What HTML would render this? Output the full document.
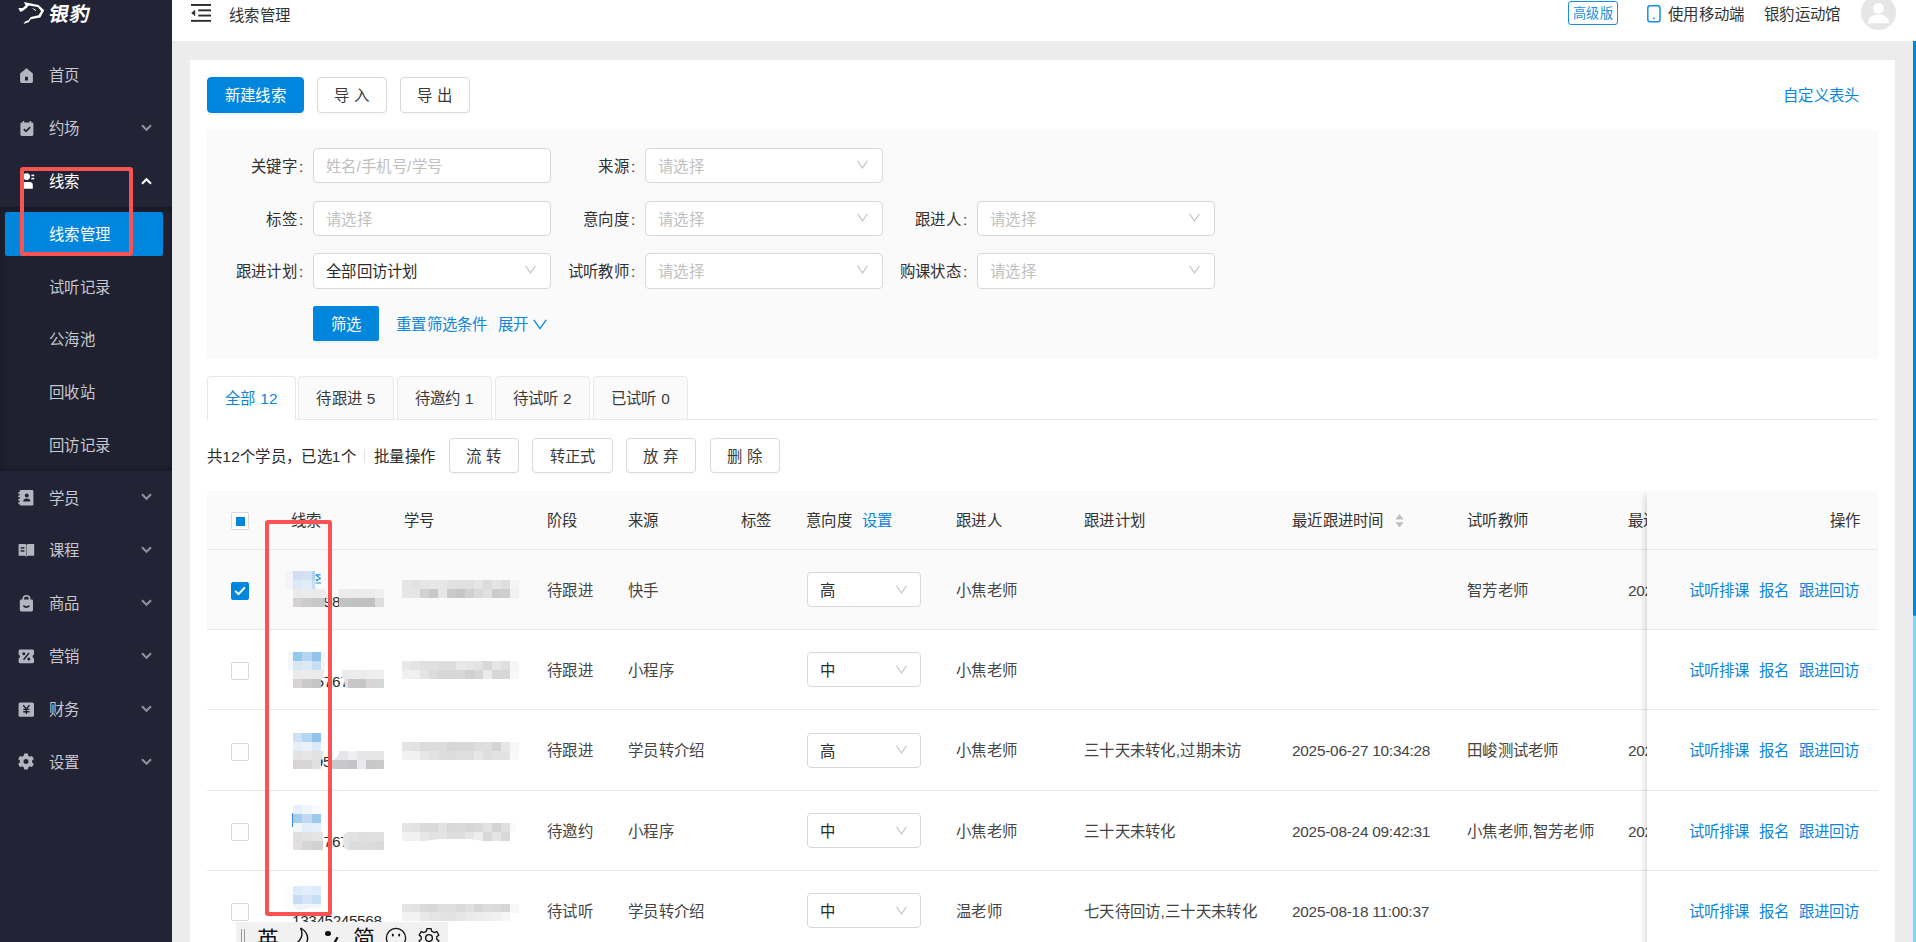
<!DOCTYPE html>
<html lang="zh-CN">
<head>
<meta charset="utf-8">
<title>线索管理</title>
<style>
*{box-sizing:border-box;margin:0;padding:0}
html,body{width:1916px;height:942px;overflow:hidden}
body{position:relative;background:#ececec;font-family:"Liberation Sans",sans-serif;font-size:15.4px;color:#2b2b2b;line-height:1;letter-spacing:0.3px}
.abs{position:absolute}
svg{display:block}
/* sidebar */
#side{position:absolute;left:0;top:0;width:172px;height:942px;background:#222435}
#sub{position:absolute;left:0;top:207px;width:172px;height:264px;background:#1f2130;box-shadow:inset 0 3px 6px -2px rgba(0,0,0,.3),inset 0 -3px 6px -2px rgba(0,0,0,.3)}
#act{position:absolute;left:5px;top:212px;width:158px;height:44px;background:#0086dc;border-radius:2px}
.mi{position:absolute;left:49px;margin-top:1px;height:20px;line-height:20px;font-size:15.4px;color:#c6c7cf;white-space:nowrap}
.mi.w{color:#fff}
.ic{position:absolute;left:19px}
.chev{position:absolute;left:141px}
/* header */
#head{position:absolute;left:172px;top:0;width:1744px;height:41px;background:#fff}
#head .t{position:absolute;margin-top:1px;height:20px;line-height:20px;white-space:nowrap;color:#333}
/* card */
#card{position:absolute;left:190px;top:60px;width:1705px;height:882px;background:#fff}
.btn{position:absolute;height:36px;line-height:36px;border:1px solid #d9d9d9;border-radius:4px;background:#fff;text-align:center;color:#3a3a3a;white-space:nowrap;box-shadow:0 2px 0 rgba(0,0,0,.015)}
.btn.p{background:#0086dc;border-color:#0086dc;color:#fff;box-shadow:0 2px 0 rgba(0,0,0,.045)}
.btn.s{height:35px;line-height:35px}
.lnk{color:#0b86dc !important}
#filt{position:absolute;left:207px;top:130px;width:1671px;height:229px;background:#fafafa}
.lab i{font-style:normal;margin:0 1px 0 2px}
.lab{position:absolute;margin-top:1px;width:120px;text-align:right;height:20px;line-height:20px;white-space:nowrap;color:#303030}
.inp{position:absolute;width:238px;height:35px;border:1px solid #d9d9d9;border-radius:4px;background:#fff;line-height:35px;padding-left:12px;color:#bfbfbf;white-space:nowrap}
.inp.v{color:#2b2b2b}
.inp svg{position:absolute;right:14px;top:11px}
/* tabs */
.tab{position:absolute;top:376px;height:44px;border:1px solid #e8e8e8;border-radius:4px 4px 0 0;background:#fafafa;line-height:44px;text-align:center;color:#3a3a3a;white-space:nowrap}
.tab.on{background:#fff;border-bottom-color:#fff;color:#0b86dc}
#tabline{position:absolute;left:207px;top:419px;width:1671px;height:1px;background:#e8e8e8}
/* table */
#thead{position:absolute;left:207px;top:491px;width:1671px;height:59px;background:#fafafa;border-bottom:1px solid #e8e8e8;border-radius:4px 4px 0 0}
.row{position:absolute;left:207px;width:1671px;border-bottom:1px solid #e8e8e8}
.row.sel{background:#fafafa}
.c{position:absolute;margin-top:1px;height:20px;line-height:20px;white-space:nowrap;color:#454545}
.h .c{color:#333}
.c.n{letter-spacing:-0.25px}
.cb{position:absolute;left:24px;width:18px;height:18px;border:1px solid #d9d9d9;border-radius:2px;background:#fff}
.cb.on{background:#0086dc;border-color:#0086dc}
.sel2{position:absolute;left:600px;width:114px;height:35px;border:1px solid #d9d9d9;border-radius:4px;background:#fff;line-height:35px;padding-left:12px;color:#2b2b2b}
.sel2 svg{position:absolute;right:13px;top:11.6px}
#fix{position:absolute;left:1647px;top:491px;width:231px;height:470px;box-shadow:-6px 0 6px -4px rgba(0,0,0,.15);background:#fff}
.px{position:absolute}
</style>
</head>
<body>
<div id="side">
  <!-- logo -->
  <svg class="abs" style="left:18px;top:1px" width="28" height="25" viewBox="0 0 28 25">
    <path d="M5.9 1 L20.5 4 L26.2 9.3 L22.3 16.5 L12.7 18.3 L10.9 20.9 L5.6 22.9 L7 20.5 L10.5 19.2 L12.7 16.1 L20.5 14.3 L23.2 10 L19.7 5.9 L10.6 4.5 L9.2 6.5 L4.3 10.2 L2.1 10.8 L0.4 6.9 L4.8 6.9 L7.6 4.3 Z" fill="#fff"/>
    <path d="M13.6 7.2 L16.8 7.9 L18.2 9.8 L17.4 9.9 L16.2 8.7 Z" fill="#fff"/>
  </svg>
  <div class="abs" style="left:46.5px;top:3px;width:48px;height:22px;line-height:22px;font-size:19.5px;font-weight:bold;color:#fff;letter-spacing:1.6px;transform:skewX(-11deg);transform-origin:0 100%">银豹</div>

  <div id="sub"></div>
  <div id="act"></div>

  <!-- icons -->
  <!-- home -->
  <svg class="ic" style="left:20px;top:68px" width="13" height="15" viewBox="0 0 13 15"><path d="M6.5 0.2 L12.9 5.6 V13.6 Q12.9 14.9 11.6 14.9 H1.4 Q0.1 14.9 0.1 13.6 V5.6 Z M5 8.8 V12.6 H8 V8.8 Z" fill="#b4b5be" fill-rule="evenodd"/></svg>
  <!-- calendar check -->
  <svg class="ic" style="left:20px;top:121px" width="14" height="15" viewBox="0 0 14 15"><path d="M2.6 0 H4.2 V1.4 H9.6 V0 H11.2 V1.4 H12 Q13.4 1.4 13.4 2.8 V13.6 Q13.4 15 12 15 H1.8 Q0.4 15 0.4 13.6 V2.8 Q0.4 1.4 1.8 1.4 H2.6 Z" fill="#b4b5be"/><path d="M3.8 8.2 L6 10.4 L10.2 6.2" fill="none" stroke="#222435" stroke-width="1.7"/></svg>
  <!-- user list (active, white) -->
  <svg class="ic" style="left:20px;top:172px" width="15" height="18" viewBox="0 0 15 18"><circle cx="6.6" cy="4.6" r="3.4" fill="#fff"/><path d="M2.2 16.8 V13 Q2.2 10 5.2 10 H9.6 Q12.8 10 12.8 13 V16.8 Z" fill="#fff"/><rect x="11.4" y="2.6" width="2.8" height="1.6" fill="#fff"/><rect x="11.4" y="5.8" width="2.8" height="1.6" fill="#fff"/></svg>
  <!-- contact book -->
  <svg class="ic" style="left:18px;top:490px" width="16" height="16" viewBox="0 0 16 16"><path d="M3 0 H14 Q15.4 0 15.4 1.4 V14.2 Q15.4 15.6 14 15.6 H3 Q1.6 15.6 1.6 14.2 V1.4 Q1.6 0 3 0 Z" fill="#b4b5be"/><rect x="0" y="2.2" width="2.6" height="1.5" rx=".7" fill="#b4b5be"/><rect x="0" y="5.6" width="2.6" height="1.5" rx=".7" fill="#b4b5be"/><rect x="0" y="9" width="2.6" height="1.5" rx=".7" fill="#b4b5be"/><rect x="0" y="12.2" width="2.6" height="1.5" rx=".7" fill="#b4b5be"/><circle cx="8.8" cy="5.4" r="2" fill="#222435"/><path d="M5.2 11.4 Q5.2 8.4 8.8 8.4 Q12.4 8.4 12.4 11.4 Z" fill="#222435"/></svg>
  <!-- book -->
  <svg class="ic" style="left:18px;top:543px" width="17" height="15" viewBox="0 0 17 15"><path d="M0.6 1 H6.4 Q8 1 8.4 2 Q8.8 1 10.4 1 H16.2 V12.8 H10.4 Q9 12.8 8.4 14.2 Q7.8 12.8 6.4 12.8 H0.6 Z" fill="#b4b5be"/><rect x="2.6" y="4.2" width="3.8" height="1.5" fill="#222435"/><rect x="2.6" y="7.2" width="3.8" height="1.5" fill="#222435"/><rect x="8" y="2.4" width=".8" height="10.8" fill="#222435" opacity=".6"/></svg>
  <!-- bag -->
  <svg class="ic" style="left:19px;top:595px" width="15" height="17" viewBox="0 0 15 17"><path d="M4.2 5 V4 Q4.2 0.8 7.4 0.8 Q10.6 0.8 10.6 4 V5" fill="none" stroke="#b4b5be" stroke-width="1.6"/><path d="M2.2 4.6 H12.6 Q14 4.6 14 6 V15 Q14 16.4 12.6 16.4 H2.2 Q0.8 16.4 0.8 15 V6 Q0.8 4.6 2.2 4.6 Z" fill="#b4b5be"/><path d="M4.4 10.6 Q7.4 13.6 10.4 10.6" fill="none" stroke="#222435" stroke-width="1.6"/></svg>
  <!-- coupon percent -->
  <svg class="ic" style="left:18px;top:648.7px" width="17" height="15" viewBox="0 0 17 15"><path d="M2 0.6 H14.6 Q16 0.6 16 2 V5.4 Q14.6 5.8 14.6 7.4 Q14.6 9 16 9.4 V12.8 Q16 14.2 14.6 14.2 H2 Q0.6 14.2 0.6 12.8 V9.4 Q2 9 2 7.4 Q2 5.8 0.6 5.4 V2 Q0.6 0.6 2 0.6 Z" fill="#b4b5be"/><path d="M5.6 10.8 L11 4" stroke="#222435" stroke-width="1.5"/><circle cx="5.8" cy="4.8" r="1.5" fill="#222435"/><circle cx="10.8" cy="10" r="1.5" fill="#222435"/></svg>
  <!-- yen -->
  <svg class="ic" style="left:18px;top:701.7px" width="17" height="15" viewBox="0 0 17 15"><rect x="0.6" y="0.4" width="15.4" height="14.4" rx="1.6" fill="#b4b5be"/><path d="M5.2 3.2 L8.3 7 L11.4 3.2 M8.3 7 V12 M5.2 7.4 H11.4 M5.2 9.8 H11.4" fill="none" stroke="#222435" stroke-width="1.4"/></svg>
  <!-- gear -->
  <svg class="ic" style="left:18px;top:753px" width="16" height="17" viewBox="0 0 16 17"><g transform="translate(8 8.5)"><g fill="#b4b5be"><rect x="-2.1" y="-8" width="4.2" height="16" rx="1"/><rect x="-2.1" y="-8" width="4.2" height="16" rx="1" transform="rotate(60)"/><rect x="-2.1" y="-8" width="4.2" height="16" rx="1" transform="rotate(120)"/><circle r="6.2"/></g><circle r="2.5" fill="#222435"/></g></svg>

  <!-- labels -->
  <div class="mi" style="top:65px">首页</div>
  <div class="mi" style="top:118px">约场</div>
  <div class="mi w" style="top:171px">线索</div>
  <div class="mi w" style="top:224px">线索管理</div>
  <div class="mi" style="top:277px">试听记录</div>
  <div class="mi" style="top:329px">公海池</div>
  <div class="mi" style="top:382px">回收站</div>
  <div class="mi" style="top:435px">回访记录</div>
  <div class="mi" style="top:488px">学员</div>
  <div class="mi" style="top:540px">课程</div>
  <div class="mi" style="top:593px">商品</div>
  <div class="mi" style="top:646px">营销</div>
  <div class="mi" style="top:699px">财务</div>
  <div class="mi" style="top:752px">设置</div>

  <!-- chevrons -->
  <svg class="chev" style="top:124px" width="11" height="8" viewBox="0 0 11 8"><path d="M1 1.2 L5.5 5.8 L10 1.2" fill="none" stroke="#8e909b" stroke-width="2.1"/></svg>
  <svg class="chev" style="top:177px" width="11" height="8" viewBox="0 0 11 8"><path d="M1 6.8 L5.5 2.2 L10 6.8" fill="none" stroke="#fff" stroke-width="2.1"/></svg>
  <svg class="chev" style="top:493px" width="11" height="8" viewBox="0 0 11 8"><path d="M1 1.2 L5.5 5.8 L10 1.2" fill="none" stroke="#8e909b" stroke-width="2.1"/></svg>
  <svg class="chev" style="top:546px" width="11" height="8" viewBox="0 0 11 8"><path d="M1 1.2 L5.5 5.8 L10 1.2" fill="none" stroke="#8e909b" stroke-width="2.1"/></svg>
  <svg class="chev" style="top:599px" width="11" height="8" viewBox="0 0 11 8"><path d="M1 1.2 L5.5 5.8 L10 1.2" fill="none" stroke="#8e909b" stroke-width="2.1"/></svg>
  <svg class="chev" style="top:652px" width="11" height="8" viewBox="0 0 11 8"><path d="M1 1.2 L5.5 5.8 L10 1.2" fill="none" stroke="#8e909b" stroke-width="2.1"/></svg>
  <svg class="chev" style="top:705px" width="11" height="8" viewBox="0 0 11 8"><path d="M1 1.2 L5.5 5.8 L10 1.2" fill="none" stroke="#8e909b" stroke-width="2.1"/></svg>
  <svg class="chev" style="top:758px" width="11" height="8" viewBox="0 0 11 8"><path d="M1 1.2 L5.5 5.8 L10 1.2" fill="none" stroke="#8e909b" stroke-width="2.1"/></svg>
</div>

<div id="head">
  <!-- menu fold icon: page x 191..211 => local 19..39 -->
  <svg class="abs" style="left:19px;top:4px" width="20" height="18" viewBox="0 0 20 18">
    <rect x="0" y="0" width="20" height="1.9" fill="#2e2e2e"/>
    <rect x="7.2" y="5.4" width="12.8" height="1.9" fill="#2e2e2e"/>
    <rect x="7.2" y="10.6" width="12.8" height="1.9" fill="#2e2e2e"/>
    <rect x="0" y="15.9" width="20" height="1.9" fill="#2e2e2e"/>
    <path d="M0.2 9 L4.2 5.8 V12.2 Z" fill="#2e2e2e"/>
  </svg>
  <div class="t" style="left:57px;top:4.5px">线索管理</div>
  <!-- badge 1568..1618 => local 1396..1446 -->
  <div class="abs" style="left:1396px;top:1px;width:50px;height:24px;border:1px solid #1a8fe0;border-radius:3px;color:#1a8fe0;font-size:13.2px;line-height:24px;text-align:center;white-space:nowrap">高级版</div>
  <!-- phone icon 1647..1661 => local 1475 -->
  <svg class="abs" style="left:1475px;top:5px" width="14" height="18" viewBox="0 0 14 18"><rect x="0.8" y="0.8" width="12.2" height="16" rx="2.4" fill="none" stroke="#1a8fe0" stroke-width="1.5"/><rect x="6.1" y="12.6" width="1.6" height="1.6" fill="#1a8fe0"/></svg>
  <div class="t" style="left:1496px;top:4px">使用移动端</div>
  <div class="t" style="left:1592px;top:4px">银豹运动馆</div>
  <!-- avatar center 1878.5,13 => local 1706.5 -->
  <svg class="abs" style="left:1689px;top:-5px" width="35" height="35" viewBox="0 0 35 35"><circle cx="17.5" cy="17.5" r="17.5" fill="#e6e6e6"/><circle cx="17.5" cy="13.4" r="5.4" fill="#fff"/><path d="M7 28.2 Q7 19.6 17.5 19.6 Q28 19.6 28 28.2 Z" fill="#fff"/></svg>
</div>
<!-- scrollbar -->
<div class="abs" style="left:1913px;top:41px;width:3px;height:901px;background:#7ed6fb"></div>
<div class="abs" style="left:1913px;top:41px;width:3px;height:575px;background:#0086dc;border-radius:0 0 2px 2px"></div>

<div id="card"></div>
<div class="btn p" style="left:207px;top:77px;width:97px">新建线索</div>
<div class="btn" style="left:317px;top:77px;width:70px">导 入</div>
<div class="btn" style="left:400px;top:77px;width:70px">导 出</div>
<div class="abs lnk" style="left:1783px;top:86px;height:20px;line-height:20px;white-space:nowrap">自定义表头</div>
<div id="filt"></div>
<div class="lab" style="left:184.5px;top:155.5px">关键字<i>:</i></div>
<div class="inp" style="left:313px;top:148px">姓名/手机号/学号</div>
<div class="lab" style="left:516.5px;top:155.5px">来源<i>:</i></div>
<div class="inp" style="left:645px;top:148px">请选择<svg width="11" height="9" viewBox="0 0 11 9"><path d="M0.6 0.8 L5.5 8 L10.4 0.8" fill="none" stroke="#bfbfbf" stroke-width="1.1"/></svg></div>
<div class="lab" style="left:184.5px;top:208.5px">标签<i>:</i></div>
<div class="inp" style="left:313px;top:201px">请选择</div>
<div class="lab" style="left:516.5px;top:208.5px">意向度<i>:</i></div>
<div class="inp" style="left:645px;top:201px">请选择<svg width="11" height="9" viewBox="0 0 11 9"><path d="M0.6 0.8 L5.5 8 L10.4 0.8" fill="none" stroke="#bfbfbf" stroke-width="1.1"/></svg></div>
<div class="lab" style="left:848.5px;top:208.5px">跟进人<i>:</i></div>
<div class="inp" style="left:977px;top:201px">请选择<svg width="11" height="9" viewBox="0 0 11 9"><path d="M0.6 0.8 L5.5 8 L10.4 0.8" fill="none" stroke="#bfbfbf" stroke-width="1.1"/></svg></div>
<div class="lab" style="left:184.5px;top:260.5px">跟进计划<i>:</i></div>
<div class="inp v" style="left:313px;top:253px;height:36px;line-height:36px">全部回访计划<svg width="11" height="9" viewBox="0 0 11 9"><path d="M0.6 0.8 L5.5 8 L10.4 0.8" fill="none" stroke="#bfbfbf" stroke-width="1.1"/></svg></div>
<div class="lab" style="left:516.5px;top:260.5px">试听教师<i>:</i></div>
<div class="inp" style="left:645px;top:253px;height:36px;line-height:36px">请选择<svg width="11" height="9" viewBox="0 0 11 9"><path d="M0.6 0.8 L5.5 8 L10.4 0.8" fill="none" stroke="#bfbfbf" stroke-width="1.1"/></svg></div>
<div class="lab" style="left:848.5px;top:260.5px">购课状态<i>:</i></div>
<div class="inp" style="left:977px;top:253px;height:36px;line-height:36px">请选择<svg width="11" height="9" viewBox="0 0 11 9"><path d="M0.6 0.8 L5.5 8 L10.4 0.8" fill="none" stroke="#bfbfbf" stroke-width="1.1"/></svg></div>
<div class="btn p s" style="left:313px;top:306px;width:66px;border-radius:2px">筛选</div>
<div class="abs lnk" style="left:396px;top:315px;height:20px;line-height:20px;white-space:nowrap">重置筛选条件</div>
<div class="abs lnk" style="left:498px;top:315px;height:20px;line-height:20px;white-space:nowrap">展开</div>
<svg class="abs" style="left:533px;top:319px" width="14" height="11" viewBox="0 0 14 11"><path d="M0.8 0.8 L7 9.6 L13.2 0.8" fill="none" stroke="#0b86dc" stroke-width="1.3"/></svg>
<div id="tabline"></div>
<div class="tab on" style="left:207px;width:89px">全部 12</div>
<div class="tab" style="left:298px;width:96px">待跟进 5</div>
<div class="tab" style="left:396.5px;width:95.5px">待邀约 1</div>
<div class="tab" style="left:494.5px;width:95.5px">待试听 2</div>
<div class="tab" style="left:593px;width:95px">已试听 0</div>
<div class="abs" style="left:207px;top:447px;height:20px;line-height:20px;white-space:nowrap;color:#2b2b2b">共12个学员，已选1个</div>
<div class="abs" style="left:364px;top:449px;width:1px;height:14px;background:#e4e4e4"></div>
<div class="abs" style="left:374px;top:447px;height:20px;line-height:20px;white-space:nowrap;color:#2b2b2b">批量操作</div>
<div class="btn s" style="left:449px;top:438px;width:70px">流 转</div>
<div class="btn s" style="left:532px;top:438px;width:81px">转正式</div>
<div class="btn s" style="left:626px;top:438px;width:70px">放 弃</div>
<div class="btn s" style="left:710px;top:438px;width:70px">删 除</div>
<div id="thead" class="h">
<div class="cb" style="top:21px"><div class="abs" style="left:3.5px;top:3.5px;width:9.5px;height:9.5px;background:#0086dc"></div></div>
<div class="c" style="left:84px;top:19px">线索</div>
<div class="c" style="left:197px;top:19px">学号</div>
<div class="c" style="left:340px;top:19px">阶段</div>
<div class="c" style="left:421px;top:19px">来源</div>
<div class="c" style="left:534px;top:19px">标签</div>
<div class="c" style="left:599px;top:19px">意向度</div>
<div class="c" style="left:749px;top:19px">跟进人</div>
<div class="c" style="left:877px;top:19px">跟进计划</div>
<div class="c" style="left:1085px;top:19px">最近跟进时间</div>
<div class="c" style="left:1260px;top:19px">试听教师</div>
<div class="c" style="left:1421px;top:19px">最近</div>
<div class="c lnk" style="left:655px;top:19px">设置</div>
<svg class="abs" style="left:1188px;top:23px" width="9" height="14" viewBox="0 0 9 14"><path d="M4.5 0 L8.6 5.4 H0.4 Z M4.5 13.4 L8.6 8.2 H0.4 Z" fill="#bfbfbf"/></svg>
</div>
<div class="row sel" style="top:550px;height:80px">
<div class="cb on" style="top:32.0px"><svg class="abs" style="left:2px;top:3px" width="12" height="10" viewBox="0 0 12 10"><path d="M1.2 5 L4.6 8.2 L10.8 1.4" fill="none" stroke="#fff" stroke-width="2"/></svg></div>
<div class="c" style="left:340px;top:29.5px">待跟进</div>
<div class="c" style="left:421px;top:29.5px">快手</div>
<div class="c" style="left:749px;top:29.5px">小焦老师</div>
<div class="c" style="left:1260px;top:29.5px">智芳老师</div>
<div class="c n" style="left:1421px;top:29.5px">202</div>
<div class="sel2" style="top:22.0px">高<svg width="11" height="9" viewBox="0 0 11 9"><path d="M0.6 0.8 L5.5 8 L10.4 0.8" fill="none" stroke="#bfbfbf" stroke-width="1.1"/></svg></div>
<div class="c n" style="left:116.6px;top:40.5px;color:#2b2b2b">98</div><i class="px" style="left:78.0px;top:21.0px;width:8.25px;height:18.25px;background:#f4f5fa"></i><i class="px" style="left:86.0px;top:21.0px;width:9.25px;height:9.25px;background:#d0dff2"></i><i class="px" style="left:95.0px;top:21.0px;width:10.25px;height:9.25px;background:#d2e2f3"></i><i class="px" style="left:105.0px;top:21.0px;width:3.45px;height:9.25px;background:#b0d2f0"></i><i class="px" style="left:86.0px;top:30.0px;width:9.25px;height:9.25px;background:#dde9f6"></i><i class="px" style="left:95.0px;top:30.0px;width:10.25px;height:9.25px;background:#e2ecf6"></i><i class="px" style="left:105.0px;top:30.0px;width:3.45px;height:9.25px;background:#c5def3"></i><i class="px" style="left:86.0px;top:39.0px;width:9.25px;height:9.25px;background:#ebe9e9"></i><i class="px" style="left:95.0px;top:39.0px;width:10.25px;height:9.25px;background:#ebebeb"></i><i class="px" style="left:105.0px;top:39.0px;width:9.25px;height:9.25px;background:#ebebeb"></i><i class="px" style="left:132.0px;top:39.0px;width:9.25px;height:9.25px;background:#ececee"></i><i class="px" style="left:141.0px;top:39.0px;width:9.25px;height:9.25px;background:#ebebeb"></i><i class="px" style="left:150.0px;top:39.0px;width:9.25px;height:9.25px;background:#ebebeb"></i><i class="px" style="left:159.0px;top:39.0px;width:9.25px;height:9.25px;background:#ececec"></i><i class="px" style="left:168.0px;top:39.0px;width:9.25px;height:9.25px;background:#f0f0f0"></i><i class="px" style="left:86.0px;top:48.0px;width:9.25px;height:9.25px;background:#d6d0d2"></i><i class="px" style="left:95.0px;top:48.0px;width:10.25px;height:9.25px;background:#cccccc"></i><i class="px" style="left:105.0px;top:48.0px;width:9.25px;height:9.25px;background:#c8c8c8"></i><i class="px" style="left:114.0px;top:48.0px;width:3.75px;height:9.25px;background:#c8c8c8"></i><i class="px" style="left:132.0px;top:48.0px;width:9.25px;height:9.25px;background:#c2c3c5"></i><i class="px" style="left:141.0px;top:48.0px;width:9.25px;height:9.25px;background:#c1c2c2"></i><i class="px" style="left:150.0px;top:48.0px;width:9.25px;height:9.25px;background:#c0c1c0"></i><i class="px" style="left:159.0px;top:48.0px;width:9.25px;height:9.25px;background:#c0c0c0"></i><i class="px" style="left:168.0px;top:48.0px;width:9.25px;height:9.25px;background:#dddcde"></i><i class="px" style="left:195.0px;top:30.0px;width:9.25px;height:9.25px;background:#e6e6e6"></i><i class="px" style="left:204.0px;top:30.0px;width:9.25px;height:9.25px;background:#e2e2e2"></i><i class="px" style="left:213.0px;top:30.0px;width:9.25px;height:9.25px;background:#e5e5e5"></i><i class="px" style="left:222.0px;top:30.0px;width:9.25px;height:9.25px;background:#e7e7e7"></i><i class="px" style="left:231.0px;top:30.0px;width:9.25px;height:9.25px;background:#e7e7e7"></i><i class="px" style="left:240.0px;top:30.0px;width:9.25px;height:9.25px;background:#e2e2e2"></i><i class="px" style="left:249.0px;top:30.0px;width:9.25px;height:9.25px;background:#e0e0e0"></i><i class="px" style="left:258.0px;top:30.0px;width:9.25px;height:9.25px;background:#e0e0e0"></i><i class="px" style="left:267.0px;top:30.0px;width:9.25px;height:9.25px;background:#e5e5e5"></i><i class="px" style="left:276.0px;top:30.0px;width:9.25px;height:9.25px;background:#dcdcdc"></i><i class="px" style="left:285.0px;top:30.0px;width:9.25px;height:9.25px;background:#e5e5e5"></i><i class="px" style="left:294.0px;top:30.0px;width:9.25px;height:9.25px;background:#dedede"></i><i class="px" style="left:303.0px;top:30.0px;width:9.25px;height:9.25px;background:#f4f4f4"></i><i class="px" style="left:195.0px;top:39.0px;width:9.25px;height:9.25px;background:#e6e6e6"></i><i class="px" style="left:204.0px;top:39.0px;width:9.25px;height:9.25px;background:#e6e6e6"></i><i class="px" style="left:213.0px;top:39.0px;width:9.25px;height:9.25px;background:#d2d2d2"></i><i class="px" style="left:222.0px;top:39.0px;width:9.25px;height:9.25px;background:#c8c8c8"></i><i class="px" style="left:231.0px;top:39.0px;width:9.25px;height:9.25px;background:#e6e6e6"></i><i class="px" style="left:240.0px;top:39.0px;width:9.25px;height:9.25px;background:#cacaca"></i><i class="px" style="left:249.0px;top:39.0px;width:9.25px;height:9.25px;background:#c6c6c6"></i><i class="px" style="left:258.0px;top:39.0px;width:9.25px;height:9.25px;background:#d0d0d0"></i><i class="px" style="left:267.0px;top:39.0px;width:9.25px;height:9.25px;background:#dadada"></i><i class="px" style="left:276.0px;top:39.0px;width:9.25px;height:9.25px;background:#e0e0e0"></i><i class="px" style="left:285.0px;top:39.0px;width:9.25px;height:9.25px;background:#cccccc"></i><i class="px" style="left:294.0px;top:39.0px;width:9.25px;height:9.25px;background:#cecece"></i><i class="px" style="left:303.0px;top:39.0px;width:9.25px;height:9.25px;background:#f0f0f0"></i><svg class="abs" style="left:114.0px;top:39.0px" width="9.0" height="9.0"><polygon points="0.0,0.0 3.0,0.0 9.0,9.0 0.0,9.0" fill="#ebebeb"/></svg><svg class="abs" style="left:132.0px;top:39.5px" width="9.0" height="8.5"><polygon points="0.0,8.5 0.0,5.5 6.0,0.0 9.0,0.0 9.0,8.5" fill="#ececee"/></svg><svg class="abs" style="left:105.0px;top:30.0px" width="4.0" height="9.0"><polygon points="0.0,9.0 4.0,9.0 2.5,4.0 0.0,0.0" fill="#c5def3"/></svg><svg class="abs" style="left:108px;top:23.5px" width="7" height="10" viewBox="0 0 7 10"><path d="M0.6 0.9 H5.6 M0.8 1.2 L5.8 4.6 M5.8 4.6 L1.2 6.2 M0.6 9 H6" fill="none" stroke="#1f8ce0" stroke-width="1.1"/><path d="M0.4 5.4 L3.4 6.2 L1.6 7.6 Z" fill="#1f8ce0"/></svg>
</div>
<div class="row" style="top:630px;height:80px">
<div class="cb" style="top:32.0px"></div>
<div class="c" style="left:340px;top:29.5px">待跟进</div>
<div class="c" style="left:421px;top:29.5px">小程序</div>
<div class="c" style="left:749px;top:29.5px">小焦老师</div>
<div class="sel2" style="top:22.0px">中<svg width="11" height="9" viewBox="0 0 11 9"><path d="M0.6 0.8 L5.5 8 L10.4 0.8" fill="none" stroke="#bfbfbf" stroke-width="1.1"/></svg></div>
<div class="c n" style="left:108.5px;top:41.0px;color:#2b2b2b">5767</div><i class="px" style="left:80.5px;top:22.0px;width:37.55px;height:18.25px;background:#f4f6fb"></i><i class="px" style="left:80.5px;top:40.0px;width:5.75px;height:9.25px;background:#fffdf9"></i><i class="px" style="left:86.0px;top:22.0px;width:9.25px;height:9.25px;background:#91c8ed"></i><i class="px" style="left:95.0px;top:22.0px;width:10.25px;height:9.25px;background:#b6d5f0"></i><i class="px" style="left:105.0px;top:22.0px;width:9.25px;height:9.25px;background:#92c5eb"></i><i class="px" style="left:86.0px;top:31.0px;width:9.25px;height:9.25px;background:#d6e6f5"></i><i class="px" style="left:95.0px;top:31.0px;width:10.25px;height:9.25px;background:#dde8f5"></i><i class="px" style="left:105.0px;top:31.0px;width:9.25px;height:9.25px;background:#c7ddf3"></i><i class="px" style="left:86.0px;top:40.0px;width:9.25px;height:9.25px;background:#ebebeb"></i><i class="px" style="left:95.0px;top:40.0px;width:10.25px;height:9.25px;background:#ebebeb"></i><i class="px" style="left:105.0px;top:40.0px;width:9.25px;height:9.25px;background:#ebebeb"></i><i class="px" style="left:135.0px;top:40.0px;width:6.25px;height:9.25px;background:#eaeae8"></i><i class="px" style="left:141.0px;top:40.0px;width:9.25px;height:9.25px;background:#ebeceb"></i><i class="px" style="left:150.0px;top:40.0px;width:9.25px;height:9.25px;background:#ebebeb"></i><i class="px" style="left:159.0px;top:40.0px;width:9.25px;height:9.25px;background:#eeeeee"></i><i class="px" style="left:168.0px;top:40.0px;width:9.25px;height:9.25px;background:#efefef"></i><i class="px" style="left:86.0px;top:49.0px;width:9.25px;height:9.25px;background:#d8d4d4"></i><i class="px" style="left:95.0px;top:49.0px;width:10.25px;height:9.25px;background:#cacaca"></i><i class="px" style="left:105.0px;top:49.0px;width:9.25px;height:9.25px;background:#c4c5c7"></i><i class="px" style="left:140.6px;top:49.0px;width:0.65px;height:9.25px;background:#c8c6c6"></i><i class="px" style="left:141.0px;top:49.0px;width:9.25px;height:9.25px;background:#c8c6c6"></i><i class="px" style="left:150.0px;top:49.0px;width:9.25px;height:9.25px;background:#c5c7c6"></i><i class="px" style="left:159.0px;top:49.0px;width:9.25px;height:9.25px;background:#d8d6d4"></i><i class="px" style="left:168.0px;top:49.0px;width:9.25px;height:9.25px;background:#d6d8d7"></i><i class="px" style="left:195.0px;top:31.0px;width:9.25px;height:9.25px;background:#e8e8e8"></i><i class="px" style="left:204.0px;top:31.0px;width:9.25px;height:9.25px;background:#e4e4e4"></i><i class="px" style="left:213.0px;top:31.0px;width:9.25px;height:9.25px;background:#e0e0e0"></i><i class="px" style="left:222.0px;top:31.0px;width:9.25px;height:9.25px;background:#e0e0e0"></i><i class="px" style="left:231.0px;top:31.0px;width:9.25px;height:9.25px;background:#dedede"></i><i class="px" style="left:240.0px;top:31.0px;width:9.25px;height:9.25px;background:#dedede"></i><i class="px" style="left:249.0px;top:31.0px;width:9.25px;height:9.25px;background:#e8e8e8"></i><i class="px" style="left:258.0px;top:31.0px;width:9.25px;height:9.25px;background:#e6e6e6"></i><i class="px" style="left:267.0px;top:31.0px;width:9.25px;height:9.25px;background:#e2e2e2"></i><i class="px" style="left:276.0px;top:31.0px;width:9.25px;height:9.25px;background:#d8d8d8"></i><i class="px" style="left:285.0px;top:31.0px;width:9.25px;height:9.25px;background:#e6e6e6"></i><i class="px" style="left:294.0px;top:31.0px;width:9.25px;height:9.25px;background:#dedede"></i><i class="px" style="left:303.0px;top:31.0px;width:9.25px;height:9.25px;background:#f6f6f6"></i><i class="px" style="left:195.0px;top:40.0px;width:9.25px;height:9.25px;background:#f0f0f0"></i><i class="px" style="left:204.0px;top:40.0px;width:9.25px;height:9.25px;background:#f0f0f0"></i><i class="px" style="left:213.0px;top:40.0px;width:9.25px;height:9.25px;background:#e4e4e4"></i><i class="px" style="left:222.0px;top:40.0px;width:9.25px;height:9.25px;background:#dcdcdc"></i><i class="px" style="left:231.0px;top:40.0px;width:9.25px;height:9.25px;background:#d6d6d6"></i><i class="px" style="left:240.0px;top:40.0px;width:9.25px;height:9.25px;background:#d6d6d6"></i><i class="px" style="left:249.0px;top:40.0px;width:9.25px;height:9.25px;background:#d8d8d8"></i><i class="px" style="left:258.0px;top:40.0px;width:9.25px;height:9.25px;background:#d0d0d0"></i><i class="px" style="left:267.0px;top:40.0px;width:9.25px;height:9.25px;background:#d6d6d6"></i><i class="px" style="left:276.0px;top:40.0px;width:9.25px;height:9.25px;background:#eaeaea"></i><i class="px" style="left:285.0px;top:40.0px;width:9.25px;height:9.25px;background:#d6d6d6"></i><i class="px" style="left:294.0px;top:40.0px;width:9.25px;height:9.25px;background:#d6d6d6"></i><i class="px" style="left:303.0px;top:40.0px;width:9.25px;height:9.25px;background:#f7f7f7"></i><svg class="abs" style="left:114.0px;top:40.0px" width="3.5" height="9.0"><polygon points="0.0,0.0 3.5,0.0 1.5,9.0 0.0,9.0" fill="#ebebeb"/></svg><svg class="abs" style="left:136.5px;top:49.0px" width="4.5" height="9.0"><polygon points="0.0,0.0 4.5,0.0 4.5,9.0 2.5,9.0 0.5,5.0" fill="#dde1e5"/></svg>
</div>
<div class="row" style="top:710px;height:81px">
<div class="cb" style="top:32.5px"></div>
<div class="c" style="left:340px;top:30.0px">待跟进</div>
<div class="c" style="left:421px;top:30.0px">学员转介绍</div>
<div class="c" style="left:749px;top:30.0px">小焦老师</div>
<div class="c" style="left:877px;top:30.0px">三十天未转化,过期未访</div>
<div class="c n" style="left:1085px;top:30.0px">2025-06-27 10:34:28</div>
<div class="c" style="left:1260px;top:30.0px">田峻测试老师</div>
<div class="c n" style="left:1421px;top:30.0px">202</div>
<div class="sel2" style="top:22.5px">高<svg width="11" height="9" viewBox="0 0 11 9"><path d="M0.6 0.8 L5.5 8 L10.4 0.8" fill="none" stroke="#bfbfbf" stroke-width="1.1"/></svg></div>
<div class="c n" style="left:107.8px;top:40.8px;color:#2b2b2b">95</div><i class="px" style="left:114.0px;top:23.0px;width:4.25px;height:18.25px;background:#f9fbfe"></i><i class="px" style="left:86.0px;top:23.0px;width:9.25px;height:9.25px;background:#d0e0f3"></i><i class="px" style="left:95.0px;top:23.0px;width:10.25px;height:9.25px;background:#b5d6f1"></i><i class="px" style="left:105.0px;top:23.0px;width:9.25px;height:9.25px;background:#90c2ea"></i><i class="px" style="left:86.0px;top:32.0px;width:9.25px;height:9.25px;background:#e6eff9"></i><i class="px" style="left:95.0px;top:32.0px;width:10.25px;height:9.25px;background:#ebf1fa"></i><i class="px" style="left:105.0px;top:32.0px;width:9.25px;height:9.25px;background:#dce9f7"></i><i class="px" style="left:86.0px;top:41.0px;width:9.25px;height:9.25px;background:#e4e2e2"></i><i class="px" style="left:95.0px;top:41.0px;width:10.25px;height:9.25px;background:#e6e6e6"></i><i class="px" style="left:105.0px;top:41.0px;width:9.25px;height:9.25px;background:#e2e2e2"></i><i class="px" style="left:132.0px;top:41.0px;width:9.25px;height:9.25px;background:#e4e6ea"></i><i class="px" style="left:141.0px;top:41.0px;width:9.25px;height:9.25px;background:#efefef"></i><i class="px" style="left:150.0px;top:41.0px;width:9.25px;height:9.25px;background:#e6e6e6"></i><i class="px" style="left:159.0px;top:41.0px;width:9.25px;height:9.25px;background:#e6e6e4"></i><i class="px" style="left:168.0px;top:41.0px;width:9.25px;height:9.25px;background:#e6e6e6"></i><i class="px" style="left:86.0px;top:50.0px;width:9.25px;height:9.25px;background:#d8d4d4"></i><i class="px" style="left:95.0px;top:50.0px;width:10.25px;height:9.25px;background:#d6d4d4"></i><i class="px" style="left:105.0px;top:50.0px;width:9.25px;height:9.25px;background:#e0e0e0"></i><i class="px" style="left:125.0px;top:50.0px;width:7.25px;height:9.25px;background:#c8c8c8"></i><i class="px" style="left:132.0px;top:50.0px;width:9.25px;height:9.25px;background:#c8c8ca"></i><i class="px" style="left:141.0px;top:50.0px;width:9.25px;height:9.25px;background:#c4c4c8"></i><i class="px" style="left:150.0px;top:50.0px;width:9.25px;height:9.25px;background:#e8eaec"></i><i class="px" style="left:159.0px;top:50.0px;width:9.25px;height:9.25px;background:#c8c8c6"></i><i class="px" style="left:168.0px;top:50.0px;width:9.25px;height:9.25px;background:#cacaca"></i><i class="px" style="left:195.0px;top:32.0px;width:9.25px;height:9.25px;background:#e4e4e4"></i><i class="px" style="left:204.0px;top:32.0px;width:9.25px;height:9.25px;background:#e2e2e2"></i><i class="px" style="left:213.0px;top:32.0px;width:9.25px;height:9.25px;background:#dcdcdc"></i><i class="px" style="left:222.0px;top:32.0px;width:9.25px;height:9.25px;background:#dcdcdc"></i><i class="px" style="left:231.0px;top:32.0px;width:9.25px;height:9.25px;background:#dcdcdc"></i><i class="px" style="left:240.0px;top:32.0px;width:9.25px;height:9.25px;background:#d6d6d6"></i><i class="px" style="left:249.0px;top:32.0px;width:9.25px;height:9.25px;background:#d8d8d8"></i><i class="px" style="left:258.0px;top:32.0px;width:9.25px;height:9.25px;background:#d8d8d8"></i><i class="px" style="left:267.0px;top:32.0px;width:9.25px;height:9.25px;background:#dedede"></i><i class="px" style="left:276.0px;top:32.0px;width:9.25px;height:9.25px;background:#dedede"></i><i class="px" style="left:285.0px;top:32.0px;width:9.25px;height:9.25px;background:#d4d4d4"></i><i class="px" style="left:294.0px;top:32.0px;width:9.25px;height:9.25px;background:#e6e6e6"></i><i class="px" style="left:303.0px;top:32.0px;width:9.25px;height:9.25px;background:#f7f7f7"></i><i class="px" style="left:195.0px;top:41.0px;width:9.25px;height:9.25px;background:#f1f1f1"></i><i class="px" style="left:204.0px;top:41.0px;width:9.25px;height:9.25px;background:#f1f1f1"></i><i class="px" style="left:213.0px;top:41.0px;width:9.25px;height:9.25px;background:#e6e6e6"></i><i class="px" style="left:222.0px;top:41.0px;width:9.25px;height:9.25px;background:#e2e2e2"></i><i class="px" style="left:231.0px;top:41.0px;width:9.25px;height:9.25px;background:#dedede"></i><i class="px" style="left:240.0px;top:41.0px;width:9.25px;height:9.25px;background:#dcdcdc"></i><i class="px" style="left:249.0px;top:41.0px;width:9.25px;height:9.25px;background:#dedede"></i><i class="px" style="left:258.0px;top:41.0px;width:9.25px;height:9.25px;background:#dedede"></i><i class="px" style="left:267.0px;top:41.0px;width:9.25px;height:9.25px;background:#e6e6e6"></i><i class="px" style="left:276.0px;top:41.0px;width:9.25px;height:9.25px;background:#dedede"></i><i class="px" style="left:285.0px;top:41.0px;width:9.25px;height:9.25px;background:#e2e2e2"></i><i class="px" style="left:294.0px;top:41.0px;width:9.25px;height:9.25px;background:#e2e2e2"></i><i class="px" style="left:303.0px;top:41.0px;width:9.25px;height:9.25px;background:#f9f9f9"></i><svg class="abs" style="left:114.0px;top:41.0px" width="3.0" height="9.0"><polygon points="0.0,0.0 3.0,0.0 0.5,9.0 0.0,9.0" fill="#e2e2e2"/></svg><svg class="abs" style="left:127.0px;top:41.0px" width="7.5" height="9.0"><polygon points="0.0,9.0 5.0,9.0 5.0,0.0 7.5,0.0" fill="#e4e6ea"/></svg>
</div>
<div class="row" style="top:791px;height:80px">
<div class="cb" style="top:32.0px"></div>
<div class="c" style="left:340px;top:29.5px">待邀约</div>
<div class="c" style="left:421px;top:29.5px">小程序</div>
<div class="c" style="left:749px;top:29.5px">小焦老师</div>
<div class="c" style="left:877px;top:29.5px">三十天未转化</div>
<div class="c n" style="left:1085px;top:29.5px">2025-08-24 09:42:31</div>
<div class="c" style="left:1260px;top:29.5px">小焦老师,智芳老师</div>
<div class="c n" style="left:1421px;top:29.5px">202</div>
<div class="sel2" style="top:22.0px">中<svg width="11" height="9" viewBox="0 0 11 9"><path d="M0.6 0.8 L5.5 8 L10.4 0.8" fill="none" stroke="#bfbfbf" stroke-width="1.1"/></svg></div>
<div class="c n" style="left:116.6px;top:39.6px;color:#2b2b2b">767</div><i class="px" style="left:86.0px;top:14.0px;width:9.25px;height:9.25px;background:#e6f0fa"></i><i class="px" style="left:95.0px;top:14.0px;width:10.25px;height:9.25px;background:#f0f5fb"></i><i class="px" style="left:105.0px;top:14.0px;width:9.25px;height:9.25px;background:#f8fafd"></i><i class="px" style="left:86.0px;top:23.0px;width:9.25px;height:9.25px;background:#a3ccee"></i><i class="px" style="left:95.0px;top:23.0px;width:10.25px;height:9.25px;background:#c2d8f2"></i><i class="px" style="left:105.0px;top:23.0px;width:9.25px;height:9.25px;background:#9ccaee"></i><i class="px" style="left:86.0px;top:32.0px;width:9.25px;height:9.25px;background:#f2f7fc"></i><i class="px" style="left:95.0px;top:32.0px;width:10.25px;height:9.25px;background:#e2eefa"></i><i class="px" style="left:105.0px;top:32.0px;width:9.25px;height:9.25px;background:#e4effa"></i><i class="px" style="left:84.6px;top:22.0px;width:1.65px;height:13.75px;background:#3d86dc"></i><i class="px" style="left:86.0px;top:41.3px;width:9.25px;height:8.95px;background:#e0dede"></i><i class="px" style="left:95.0px;top:41.3px;width:10.25px;height:8.95px;background:#e2e2e2"></i><i class="px" style="left:105.0px;top:41.3px;width:9.25px;height:8.95px;background:#e4e4e4"></i><i class="px" style="left:114.0px;top:41.3px;width:2.25px;height:8.95px;background:#e4e4e4"></i><i class="px" style="left:141.0px;top:41.3px;width:9.25px;height:8.95px;background:#e2e2e2"></i><i class="px" style="left:150.0px;top:41.3px;width:9.25px;height:8.95px;background:#dedfe1"></i><i class="px" style="left:159.0px;top:41.3px;width:9.25px;height:8.95px;background:#e0e0e0"></i><i class="px" style="left:168.0px;top:41.3px;width:9.25px;height:8.95px;background:#e0e0e2"></i><i class="px" style="left:86.0px;top:50.0px;width:9.25px;height:8.95px;background:#e2dede"></i><i class="px" style="left:95.0px;top:50.0px;width:10.25px;height:8.95px;background:#d6d6d6"></i><i class="px" style="left:105.0px;top:50.0px;width:9.25px;height:8.95px;background:#d2d2d2"></i><i class="px" style="left:114.0px;top:50.0px;width:2.25px;height:8.95px;background:#d2d2d2"></i><i class="px" style="left:141.0px;top:50.0px;width:9.25px;height:8.95px;background:#dcdcdc"></i><i class="px" style="left:150.0px;top:50.0px;width:9.25px;height:8.95px;background:#dcdcde"></i><i class="px" style="left:159.0px;top:50.0px;width:9.25px;height:8.95px;background:#dcdcda"></i><i class="px" style="left:168.0px;top:50.0px;width:9.25px;height:8.95px;background:#d8dadc"></i><i class="px" style="left:195.0px;top:32.0px;width:9.25px;height:9.25px;background:#e4e4e4"></i><i class="px" style="left:204.0px;top:32.0px;width:9.25px;height:9.25px;background:#e2e2e2"></i><i class="px" style="left:213.0px;top:32.0px;width:9.25px;height:9.25px;background:#dadada"></i><i class="px" style="left:222.0px;top:32.0px;width:9.25px;height:9.25px;background:#dadada"></i><i class="px" style="left:231.0px;top:32.0px;width:9.25px;height:9.25px;background:#e2e2e2"></i><i class="px" style="left:240.0px;top:32.0px;width:9.25px;height:9.25px;background:#d8d8d8"></i><i class="px" style="left:249.0px;top:32.0px;width:9.25px;height:9.25px;background:#dadada"></i><i class="px" style="left:258.0px;top:32.0px;width:9.25px;height:9.25px;background:#d6d6d6"></i><i class="px" style="left:267.0px;top:32.0px;width:9.25px;height:9.25px;background:#dadada"></i><i class="px" style="left:276.0px;top:32.0px;width:9.25px;height:9.25px;background:#e2e2e2"></i><i class="px" style="left:285.0px;top:32.0px;width:9.25px;height:9.25px;background:#d4d4d4"></i><i class="px" style="left:294.0px;top:32.0px;width:9.25px;height:9.25px;background:#e0e0e0"></i><i class="px" style="left:303.0px;top:32.0px;width:6.25px;height:9.25px;background:#fafafa"></i><i class="px" style="left:195.0px;top:41.0px;width:9.25px;height:9.25px;background:#f1f1f1"></i><i class="px" style="left:204.0px;top:41.0px;width:9.25px;height:9.25px;background:#f1f1f1"></i><i class="px" style="left:213.0px;top:41.0px;width:9.25px;height:9.25px;background:#e6e6e6"></i><i class="px" style="left:222.0px;top:41.0px;width:9.25px;height:9.25px;background:#e2e2e2"></i><i class="px" style="left:231.0px;top:41.0px;width:9.25px;height:9.25px;background:#e4e4e4"></i><i class="px" style="left:240.0px;top:41.0px;width:9.25px;height:9.25px;background:#dedede"></i><i class="px" style="left:249.0px;top:41.0px;width:9.25px;height:9.25px;background:#dedede"></i><i class="px" style="left:258.0px;top:41.0px;width:9.25px;height:9.25px;background:#e6e6e6"></i><i class="px" style="left:267.0px;top:41.0px;width:9.25px;height:9.25px;background:#eeeeee"></i><i class="px" style="left:276.0px;top:41.0px;width:9.25px;height:9.25px;background:#d8d8d8"></i><i class="px" style="left:285.0px;top:41.0px;width:9.25px;height:9.25px;background:#e4e4e4"></i><i class="px" style="left:294.0px;top:41.0px;width:9.25px;height:9.25px;background:#d8d8d8"></i><svg class="abs" style="left:213.0px;top:47.5px" width="65.0" height="2.5"><polygon points="0.0,2.5 20.0,0.0 50.0,0.0 65.0,2.5" fill="#ffffff"/></svg><i class="px" style="left:135.5px;top:41.299999999999955px;width:6px;height:17.5px;background:#e2e4e7;border-radius:7px 0 0 7px"></i>
</div>
<div class="row" style="top:871px;height:80px">
<div class="cb" style="top:32.0px"></div>
<div class="c" style="left:340px;top:29.5px">待试听</div>
<div class="c" style="left:421px;top:29.5px">学员转介绍</div>
<div class="c" style="left:749px;top:29.5px">温老师</div>
<div class="c" style="left:877px;top:29.5px">七天待回访,三十天未转化</div>
<div class="c n" style="left:1085px;top:29.5px">2025-08-18 11:00:37</div>
<div class="sel2" style="top:22.0px">中<svg width="11" height="9" viewBox="0 0 11 9"><path d="M0.6 0.8 L5.5 8 L10.4 0.8" fill="none" stroke="#bfbfbf" stroke-width="1.1"/></svg></div>
<i class="px" style="left:77.0px;top:15.0px;width:9.25px;height:27.25px;background:#fbfcfe"></i><i class="px" style="left:86.0px;top:15.0px;width:9.25px;height:9.25px;background:#dcebf8"></i><i class="px" style="left:95.0px;top:15.0px;width:10.25px;height:9.25px;background:#e2eef9"></i><i class="px" style="left:105.0px;top:15.0px;width:9.25px;height:9.25px;background:#dcecf9"></i><i class="px" style="left:86.0px;top:24.0px;width:9.25px;height:9.25px;background:#c5dcf3"></i><i class="px" style="left:95.0px;top:24.0px;width:10.25px;height:9.25px;background:#d6e4f5"></i><i class="px" style="left:105.0px;top:24.0px;width:9.25px;height:9.25px;background:#c4e0f5"></i><i class="px" style="left:86.0px;top:33.0px;width:28.25px;height:4.25px;background:#f0f5fb"></i><i class="px" style="left:195.0px;top:33.0px;width:9.25px;height:8.55px;background:#e4e4e4"></i><i class="px" style="left:204.0px;top:33.0px;width:9.25px;height:8.55px;background:#e2e2e2"></i><i class="px" style="left:213.0px;top:33.0px;width:9.25px;height:8.55px;background:#dadada"></i><i class="px" style="left:222.0px;top:33.0px;width:9.25px;height:8.55px;background:#d8d8d8"></i><i class="px" style="left:231.0px;top:33.0px;width:9.25px;height:8.55px;background:#dedede"></i><i class="px" style="left:240.0px;top:33.0px;width:9.25px;height:8.55px;background:#dedede"></i><i class="px" style="left:249.0px;top:33.0px;width:9.25px;height:8.55px;background:#dadada"></i><i class="px" style="left:258.0px;top:33.0px;width:9.25px;height:8.55px;background:#e0e0e0"></i><i class="px" style="left:267.0px;top:33.0px;width:9.25px;height:8.55px;background:#d6d6d6"></i><i class="px" style="left:276.0px;top:33.0px;width:9.25px;height:8.55px;background:#dcdcdc"></i><i class="px" style="left:285.0px;top:33.0px;width:9.25px;height:8.55px;background:#dadada"></i><i class="px" style="left:294.0px;top:33.0px;width:9.25px;height:8.55px;background:#d6d6d6"></i><i class="px" style="left:303.0px;top:33.0px;width:9.25px;height:8.55px;background:#f7f7f7"></i><i class="px" style="left:195.0px;top:41.3px;width:9.25px;height:8.55px;background:#f2f2f2"></i><i class="px" style="left:204.0px;top:41.3px;width:9.25px;height:8.55px;background:#f2f2f2"></i><i class="px" style="left:213.0px;top:41.3px;width:9.25px;height:8.55px;background:#e8e8e8"></i><i class="px" style="left:222.0px;top:41.3px;width:9.25px;height:8.55px;background:#e4e4e4"></i><i class="px" style="left:231.0px;top:41.3px;width:9.25px;height:8.55px;background:#e4e4e4"></i><i class="px" style="left:240.0px;top:41.3px;width:9.25px;height:8.55px;background:#e2e2e2"></i><i class="px" style="left:249.0px;top:41.3px;width:9.25px;height:8.55px;background:#e6e6e6"></i><i class="px" style="left:258.0px;top:41.3px;width:9.25px;height:8.55px;background:#eaeaea"></i><i class="px" style="left:267.0px;top:41.3px;width:9.25px;height:8.55px;background:#ececec"></i><i class="px" style="left:276.0px;top:41.3px;width:9.25px;height:8.55px;background:#eeeeee"></i><i class="px" style="left:285.0px;top:41.3px;width:9.25px;height:8.55px;background:#f0f0f0"></i><i class="px" style="left:294.0px;top:41.3px;width:9.25px;height:8.55px;background:#f6f6f6"></i><svg class="abs" style="left:86.0px;top:33.0px" width="28.0" height="7.0"><polygon points="0.0,4.0 28.0,4.0 28.0,0.0 7.0,7.0" fill="#f0f5fb"/></svg><div class="c n" style="left:85.0px;top:38.5px;color:#2b2b2b"><span style="letter-spacing:-0.42px">13345245568</span></div>
</div>
<div id="fix">
<div class="abs" style="left:0;top:0;width:231px;height:59px;background:#fafafa;border-bottom:1px solid #e8e8e8"></div>
<div class="c" style="right:17.5px;top:19px;color:#333">操作</div>
<div class="abs" style="left:0;top:59px;width:231px;height:80px;background:#fafafa;border-bottom:1px solid #e8e8e8"></div>
<div class="c lnk" style="left:41.5px;top:88.5px">试听排课</div>
<div class="c lnk" style="left:112px;top:88.5px">报名</div>
<div class="c lnk" style="left:151.5px;top:88.5px">跟进回访</div>
<div class="abs" style="left:0;top:139px;width:231px;height:80px;background:#fff;border-bottom:1px solid #e8e8e8"></div>
<div class="c lnk" style="left:41.5px;top:168.5px">试听排课</div>
<div class="c lnk" style="left:112px;top:168.5px">报名</div>
<div class="c lnk" style="left:151.5px;top:168.5px">跟进回访</div>
<div class="abs" style="left:0;top:219px;width:231px;height:81px;background:#fff;border-bottom:1px solid #e8e8e8"></div>
<div class="c lnk" style="left:41.5px;top:249.0px">试听排课</div>
<div class="c lnk" style="left:112px;top:249.0px">报名</div>
<div class="c lnk" style="left:151.5px;top:249.0px">跟进回访</div>
<div class="abs" style="left:0;top:300px;width:231px;height:80px;background:#fff;border-bottom:1px solid #e8e8e8"></div>
<div class="c lnk" style="left:41.5px;top:329.5px">试听排课</div>
<div class="c lnk" style="left:112px;top:329.5px">报名</div>
<div class="c lnk" style="left:151.5px;top:329.5px">跟进回访</div>
<div class="abs" style="left:0;top:380px;width:231px;height:80px;background:#fff;border-bottom:1px solid #e8e8e8"></div>
<div class="c lnk" style="left:41.5px;top:409.5px">试听排课</div>
<div class="c lnk" style="left:112px;top:409.5px">报名</div>
<div class="c lnk" style="left:151.5px;top:409.5px">跟进回访</div>
</div>

<!-- red annotation rectangles -->
<div class="abs" style="left:20px;top:167px;width:113px;height:88.5px;border:4px solid #f95353;border-radius:3px"></div>
<div class="abs" style="left:265px;top:520px;width:67px;height:395.5px;border:4px solid #f95353;border-radius:3px"></div>
<!-- IME toolbar -->
<div class="abs" style="left:236px;top:922px;width:212px;height:20px;background:#f1f1f1;overflow:hidden;letter-spacing:0">
  <div class="abs" style="left:5px;top:7px;width:1px;height:13px;background:#9a9a9a"></div>
  <div class="abs" style="left:8px;top:7px;width:1px;height:13px;background:#9a9a9a"></div>
  <div class="abs" style="left:21px;top:5px;font-size:22px;line-height:26px;height:26px;color:#111">英</div>
  <svg class="abs" style="left:58px;top:5px" width="18" height="18" viewBox="0 0 18 18"><path d="M6.6 1 Q17.5 7.5 11.5 18" fill="none" stroke="#111" stroke-width="1.4"/><path d="M6.6 1 Q11 11 0.8 17.4" fill="none" stroke="#111" stroke-width="1.4"/></svg>
  <div class="abs" style="left:88.8px;top:8.6px;width:6px;height:5.6px;border-radius:50%;background:#111"></div>
  <svg class="abs" style="left:96px;top:14px" width="8" height="8" viewBox="0 0 8 8"><path d="M5.6 1.2 L2 7.6" fill="none" stroke="#111" stroke-width="2.3"/></svg>
  <div class="abs" style="left:117px;top:4px;font-size:22px;line-height:26px;height:26px;color:#111">简</div>
  <svg class="abs" style="left:149px;top:5.4px" width="22" height="22" viewBox="0 0 22 22"><circle cx="11" cy="11" r="9.6" fill="none" stroke="#111" stroke-width="1.3"/><ellipse cx="7.8" cy="8" rx="1" ry="1.5" fill="#111"/><ellipse cx="14.2" cy="8" rx="1" ry="1.5" fill="#111"/></svg>
  <svg class="abs" style="left:181.5px;top:5px" width="22" height="22" viewBox="0 0 22 22"><g transform="translate(11 11)" fill="none" stroke="#111" stroke-width="1.3"><circle r="3.4"/><path d="M-2 -9.4 H2 L2.8 -6.8 L5.2 -5.4 L7.8 -6.4 L9.8 -3 L7.8 -1.2 V1.2 L9.8 3 L7.8 6.4 L5.2 5.4 L2.8 6.8 L2 9.4 H-2 L-2.8 6.8 L-5.2 5.4 L-7.8 6.4 L-9.8 3 L-7.8 1.2 V-1.2 L-9.8 -3 L-7.8 -6.4 L-5.2 -5.4 L-2.8 -6.8 Z"/></g></svg>
</div>

</body>
</html>
